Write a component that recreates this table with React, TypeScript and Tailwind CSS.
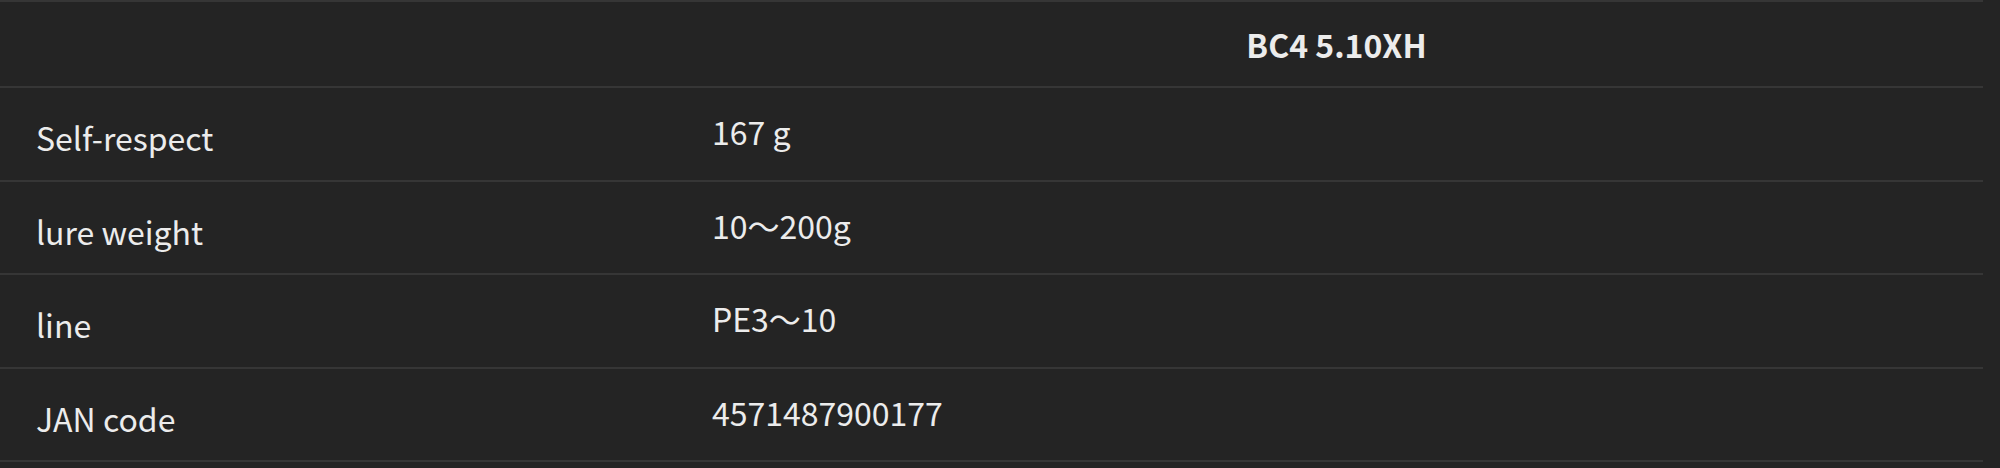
import React from "react";

const rows: { k: string; v: string; h: string }[] = [
  { k: "Self-respect", v: "167 g", h: "h-[94px]" },
  { k: "lure weight", v: "10～200g", h: "h-[93px]" },
  { k: "line", v: "PE3～10", h: "h-[94px]" },
  { k: "JAN code", v: "4571487900177", h: "h-[93px]" },
];

export default function App() {
  return (
    <div
      className="w-[2000px] h-[468px] bg-[#242424] text-[#ececec]"
      style={{ fontFamily: '"Noto Sans CJK JP", "Noto Sans", sans-serif' }}
    >
      <div className="w-[1983px] border-t-2 border-[#363636]">
        <div className="grid grid-cols-[676px_1fr] h-[86px] border-b-2 border-[#363636]">
          <div />
          <div className="flex items-center justify-center pl-[14px] text-[32px] font-bold leading-none">
            BC4 5.10XH
          </div>
        </div>
        {rows.map(({ k, v, h }) => (
          <div
            key={k}
            className={`grid grid-cols-[676px_1fr] ${h} border-b-2 border-[#363636]`}
          >
            <div className="flex items-center pl-[36px] pt-[6px] text-[32px] leading-none">
              {k}
            </div>
            <div className="flex items-center pl-[36px] pb-[6px] text-[32px] leading-none">
              {v}
            </div>
          </div>
        ))}
      </div>
    </div>
  );
}
